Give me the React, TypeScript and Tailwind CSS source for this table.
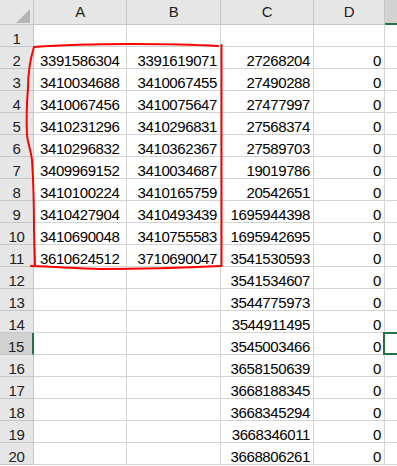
import React from "react";

const colA = [
  "3391586304", "3410034688", "3410067456", "3410231296", "3410296832",
  "3409969152", "3410100224", "3410427904", "3410690048", "3610624512",
];
const colB = [
  "3391619071", "3410067455", "3410075647", "3410296831", "3410362367",
  "3410034687", "3410165759", "3410493439", "3410755583", "3710690047",
];
const colC = [
  "27268204", "27490288", "27477997", "27568374", "27589703", "19019786",
  "20542651", "1695944398", "1695942695", "3541530593", "3541534607",
  "3544775973", "3544911495", "3545003466", "3658150639", "3668188345",
  "3668345294", "3668346011", "3668806261",
];

const gridCols = "grid grid-cols-[34px_93px_94px_93px_71px_1fr]";
const cellClass = "h-[22px] border-r border-b border-[#d4d4d4] flex items-end leading-[14px] overflow-hidden whitespace-nowrap";
const headClass = "h-[25px] border-r border-b border-[#c6c6c6] bg-[#e6e6e6] flex items-center justify-center leading-[24px] text-[#222]";

const CornerTriangle = () => (
  <svg width="34" height="25" className="block">
    <polygon points="16,23 30,23 30,9" fill="#b4b4b4" />
  </svg>
);

const App = () => {
  const rows = Array.from({ length: 20 }, (_, i) => i + 1);

  return (
    <div className="relative w-[397px] h-[466px] overflow-hidden bg-white font-['Liberation_Sans',Arial,sans-serif] text-[15px] tracking-[-0.4px] text-black">
      <div className={gridCols}>
        <div className="h-[25px] border-r border-b border-[#c6c6c6] bg-[#e6e6e6]">
          <CornerTriangle />
        </div>
        <div className={headClass}>A</div>
        <div className={headClass}>B</div>
        <div className={headClass}>C</div>
        <div className={headClass}>D</div>
        <div className="h-[25px] border-b-2 border-[#217346] bg-[#d2d2d2]" />
      </div>

      {rows.map((r) => {
        const selected = r === 15;
        const a = r >= 2 && r <= 11 ? colA[r - 2] : "";
        const b = r >= 2 && r <= 11 ? colB[r - 2] : "";
        const c = r >= 2 ? colC[r - 2] : "";
        const d = r >= 2 ? "0" : "";
        return (
          <div key={r} className={gridCols}>
            <div
              className={`h-[22px] border-b border-[#c6c6c6] flex items-end justify-center leading-[14px] text-[#222] ${
                selected ? "bg-[#d2d2d2] border-r-2 border-r-[#217346]" : "bg-[#e6e6e6] border-r"
              }`}
            >
              {r}
            </div>
            <div className={`${cellClass} justify-start pl-[6px]`}>{a}</div>
            <div className={`${cellClass} justify-end pr-[3px]`}>{b}</div>
            <div className={`${cellClass} justify-end pr-[3px]`}>{c}</div>
            <div className={`${cellClass} justify-end pr-[3px]`}>{d}</div>
            <div className="relative h-[22px] border-b border-[#d4d4d4]">
              {selected && (
                <div className="absolute left-[-2px] top-[-1px] right-[-2px] bottom-[-1px] border-2 border-[#217346]" />
              )}
            </div>
          </div>
        );
      })}

      <svg
        className="absolute left-0 top-0 pointer-events-none"
        width="397"
        height="466"
        fill="none"
        stroke="#ff0000"
        strokeWidth="2"
        strokeLinecap="round"
      >
        <path d="M34 47 C30 60, 28 75, 28 88 C27 100, 26 115, 27 135 C28 145, 31 150, 32 160 C33 175, 34 200, 34 230 L35 266" />
        <path d="M31 266 C60 267, 80 269, 100 269 C140 269, 180 268, 221 266" />
        <path d="M34 47 C60 45, 90 44, 130 44 C170 44, 200 45, 218 46" />
        <path d="M221.5 45 L221.5 266" />
      </svg>
    </div>
  );
};

export default App;
